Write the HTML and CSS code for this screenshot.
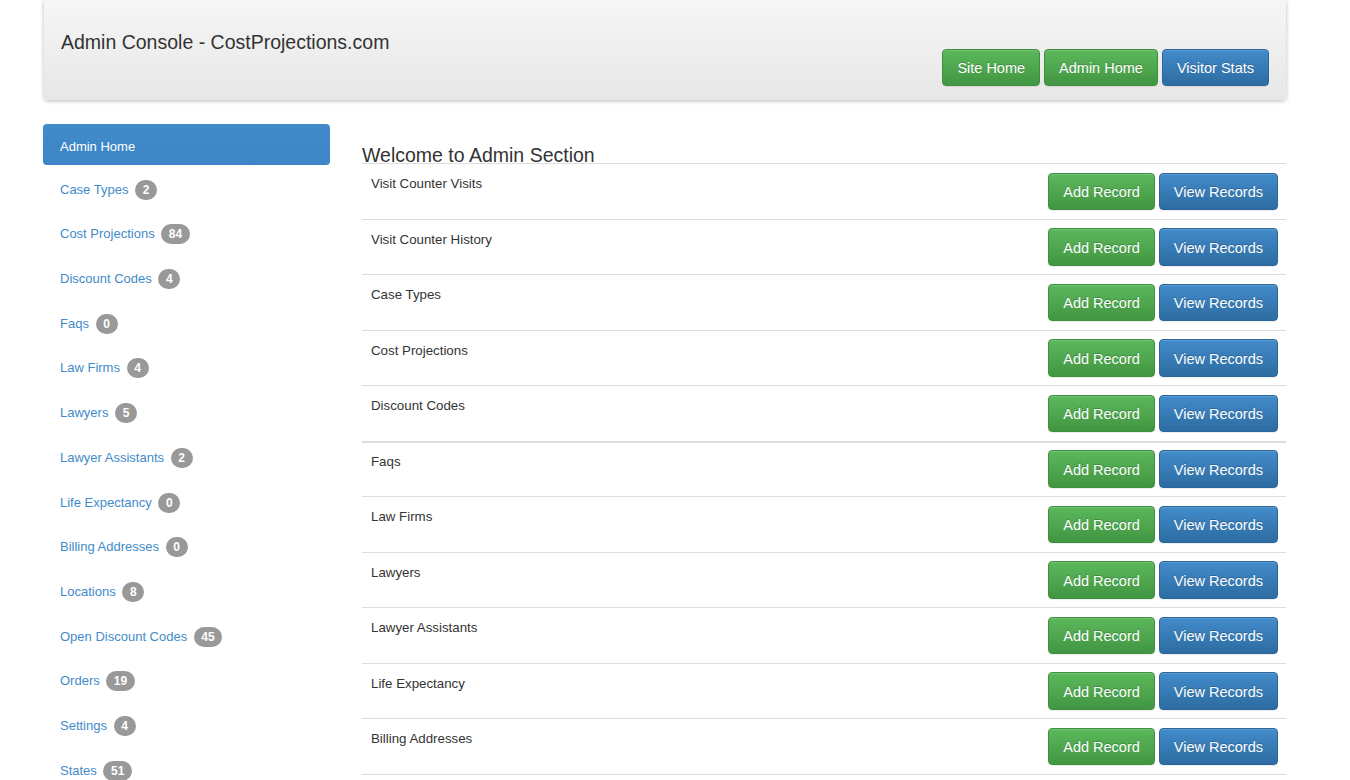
FILE: index.html
```html
<!DOCTYPE html>
<html>
<head>
<meta charset="utf-8">
<title>Admin Console - CostProjections.com</title>
<link rel="stylesheet" href="styles.css">
</head>
<body>
<div class="page">
  <header class="topbar">
    <h1 class="brand">Admin Console - CostProjections.com</h1>
    <div class="top-actions">
      <a class="btn btn-green" href="#">Site Home</a>
      <a class="btn btn-green" href="#">Admin Home</a>
      <a class="btn btn-blue" href="#">Visitor Stats</a>
    </div>
  </header>
  <div class="main">
    <nav class="sidebar">
      <a class="nav-item active" href="#">Admin Home</a>
      <a class="nav-item" href="#">Case Types <span class="badge">2</span></a>
      <a class="nav-item" href="#">Cost Projections <span class="badge">84</span></a>
      <a class="nav-item" href="#">Discount Codes <span class="badge">4</span></a>
      <a class="nav-item" href="#">Faqs <span class="badge">0</span></a>
      <a class="nav-item" href="#">Law Firms <span class="badge">4</span></a>
      <a class="nav-item" href="#">Lawyers <span class="badge">5</span></a>
      <a class="nav-item" href="#">Lawyer Assistants <span class="badge">2</span></a>
      <a class="nav-item" href="#">Life Expectancy <span class="badge">0</span></a>
      <a class="nav-item" href="#">Billing Addresses <span class="badge">0</span></a>
      <a class="nav-item" href="#">Locations <span class="badge">8</span></a>
      <a class="nav-item" href="#">Open Discount Codes <span class="badge">45</span></a>
      <a class="nav-item" href="#">Orders <span class="badge">19</span></a>
      <a class="nav-item" href="#">Settings <span class="badge">4</span></a>
      <a class="nav-item" href="#">States <span class="badge">51</span></a>
    </nav>
    <section class="content">
      <h2 class="title">Welcome to Admin Section</h2>
      <div class="table">
        <div class="row"><div class="label">Visit Counter Visits</div><div class="actions"><a class="btn btn-green" href="#">Add Record</a><a class="btn btn-blue" href="#">View Records</a></div></div>
        <div class="row"><div class="label">Visit Counter History</div><div class="actions"><a class="btn btn-green" href="#">Add Record</a><a class="btn btn-blue" href="#">View Records</a></div></div>
        <div class="row"><div class="label">Case Types</div><div class="actions"><a class="btn btn-green" href="#">Add Record</a><a class="btn btn-blue" href="#">View Records</a></div></div>
        <div class="row"><div class="label">Cost Projections</div><div class="actions"><a class="btn btn-green" href="#">Add Record</a><a class="btn btn-blue" href="#">View Records</a></div></div>
        <div class="row"><div class="label">Discount Codes</div><div class="actions"><a class="btn btn-green" href="#">Add Record</a><a class="btn btn-blue" href="#">View Records</a></div></div>
        <div class="row row-split"><div class="label">Faqs</div><div class="actions"><a class="btn btn-green" href="#">Add Record</a><a class="btn btn-blue" href="#">View Records</a></div></div>
        <div class="row"><div class="label">Law Firms</div><div class="actions"><a class="btn btn-green" href="#">Add Record</a><a class="btn btn-blue" href="#">View Records</a></div></div>
        <div class="row"><div class="label">Lawyers</div><div class="actions"><a class="btn btn-green" href="#">Add Record</a><a class="btn btn-blue" href="#">View Records</a></div></div>
        <div class="row"><div class="label">Lawyer Assistants</div><div class="actions"><a class="btn btn-green" href="#">Add Record</a><a class="btn btn-blue" href="#">View Records</a></div></div>
        <div class="row"><div class="label">Life Expectancy</div><div class="actions"><a class="btn btn-green" href="#">Add Record</a><a class="btn btn-blue" href="#">View Records</a></div></div>
        <div class="row row-last"><div class="label">Billing Addresses</div><div class="actions"><a class="btn btn-green" href="#">Add Record</a><a class="btn btn-blue" href="#">View Records</a></div></div>
      </div>
    </section>
  </div>
</div>
</body>
</html>
```

FILE: styles.css
```css
html, body {
  margin: 0;
  padding: 0;
  background: #ffffff;
}

body {
  font-family: "Liberation Sans", Arial, Helvetica, sans-serif;
  font-size: 13px;
  color: #333333;
}

a {
  text-decoration: none;
}

.page {
  width: 1243px;
  margin: 0 0 0 43px;
}

.topbar {
  box-sizing: border-box;
  height: 100px;
  margin-left: 1px;
  display: flex;
  justify-content: space-between;
  padding: 30px 17px 14px 17px;
  background: linear-gradient(#f6f6f6, #e7e7e7);
  border-radius: 0 0 4px 4px;
  box-shadow: 0 1px 4px rgba(0, 0, 0, 0.28);
}

.brand {
  margin: 0;
  align-self: flex-start;
  font-size: 19.5px;
  line-height: 24px;
  font-weight: normal;
  color: #333333;
}

.top-actions {
  align-self: flex-end;
  display: flex;
  gap: 4px;
}

.btn {
  display: inline-block;
  box-sizing: border-box;
  padding: 8.5px 14px 6.5px 14px;
  font-size: 14.5px;
  line-height: 20.5px;
  color: #ffffff;
  border: 1px solid transparent;
  border-radius: 4px;
  text-shadow: 0 -1px 0 rgba(0, 0, 0, 0.2);
  box-shadow: inset 0 1px 0 rgba(255, 255, 255, 0.15), 0 1px 1px rgba(0, 0, 0, 0.075);
  white-space: nowrap;
}

.btn-green {
  background: linear-gradient(#5cb85c, #419641);
  border-color: #3e8f3e;
}

.btn-blue {
  background: linear-gradient(#428bca, #2d6ca2);
  border-color: #2b669a;
}

.main {
  display: flex;
  gap: 32px;
  margin-top: 24px;
}

.sidebar {
  width: 287px;
  flex: none;
  display: flex;
  flex-direction: column;
  gap: 3.69px;
}

.nav-item {
  display: block;
  padding: 10px 17px;
  line-height: 21px;
  color: #428bca;
  border-radius: 4px;
}

.nav-item.active {
  padding: 12px 17px 8px 17px;
  color: #ffffff;
  background: linear-gradient(#428bca, #3c85c6);
}

.badge {
  display: inline-block;
  margin-left: 3px;
  padding: 4px 7.5px;
  min-width: 7px;
  font-size: 12px;
  font-weight: bold;
  line-height: 12px;
  color: #ffffff;
  text-align: center;
  background: #999999;
  border-radius: 10px;
}

.content {
  flex: 1;
  min-width: 0;
}

.title {
  margin: 23px 0 0 0;
  font-size: 19.5px;
  line-height: 16px;
  font-weight: normal;
  color: #333333;
}

.row {
  display: flex;
  justify-content: space-between;
  align-items: flex-start;
  border-top: 1px solid #dddddd;
  padding: 8.5px 8px 8.5px 9px;
}

.row-split {
  border-top: 2px solid #dddddd;
  padding-top: 7.5px;
}

.row-last {
  border-bottom: 1px solid #dddddd;
}

.label {
  padding-top: 1.5px;
  font-size: 13.3px;
  line-height: 20px;
}

.actions {
  display: flex;
  gap: 4px;
}
```
